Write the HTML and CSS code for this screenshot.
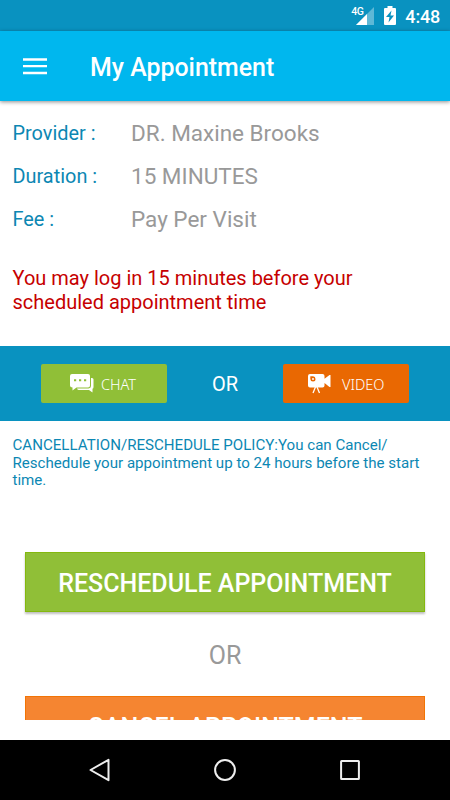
FILE: index.html
```html
<!DOCTYPE html>
<html lang="en">
<head>
  <meta charset="UTF-8" />
  <meta name="viewport" content="width=device-width, initial-scale=1.0"/>
  <title>My Appointment</title>
  <link rel="stylesheet" href="styles.css">
</head>
<body>
  <div class="status-bar">
    <div class="signal">
      <span class="network">4G</span>
      <svg width="18" height="18" viewBox="0 0 18 18">
        <path d="M18 0V18H0z" fill="#fff" opacity=".35"/>
        <path d="M11 7V18H0z" fill="#fff"/>
      </svg>
    </div>
    <svg class="battery" width="12" height="19" viewBox="0 0 12 19">
      <path d="M3.500 0h5v2H11q1 0 1 1v15q0 1-1 1H1q-1 0-1-1V3q0-1 1-1h2.500z" fill="#fff"/>
      <path d="M7.500 4.500L2 11h3.500L4.500 16.500 10 9.500H6.500z" fill="#0992c0"/>
    </svg>
    <span class="clock">4:48</span>
  </div>

  <div class="navbar">
    <svg class="menu-icon" width="24" height="17" viewBox="0 0 24 17">
      <path d="M0 1.500h24M0 8.200h24M0 15h24" stroke="#fff" stroke-width="2.300"/>
    </svg>
    <span class="navbar-title">My Appointment</span>
  </div>

  <div class="content">
    <div class="details">
      <span class="label">Provider :</span><span class="value">DR. Maxine Brooks</span>
      <span class="label">Duration :</span><span class="value">15 MINUTES</span>
      <span class="label">Fee :</span><span class="value">Pay Per Visit</span>
    </div>

    <p class="notice">You may log in 15 minutes before your scheduled appointment time</p>

    <div class="visit-bar">
      <button class="visit-btn chat-btn">
        <svg width="24" height="19" viewBox="0 0 24 19">
          <path d="M21 4h1q1.500 0 1.500 1.500V13q0 1.500-1 1.800V18.500L19 16H9q-1.500 0-2-1.600h11.500q2.500 0 2.500-2.400z" fill="#fff"/>
          <path d="M2 0h16q2 0 2 2v9.500q0 2-2 2H6.500L2.500 16.500v-3Q0 13.500 0 11.500V2Q0 0 2 0z" fill="#fff"/>
          <path d="M4 5.200h2.200v2H4zM9 5.200h2.200v2H9zM14 5.200h2.200v2H14z" fill="#90bf37"/>
        </svg>
        <span>CHAT</span>
      </button>
      <span class="visit-or">OR</span>
      <button class="visit-btn video-btn">
        <svg width="23" height="20" viewBox="0 0 23 20">
          <path d="M2 0h12.500q2 0 2 2v2.800L21.500 1H22.500v12H21.500l-5-4v2.500q0 2-2 2H2q-2 0-2-2V2q0-2 2-2z" fill="#fff"/>
          <path d="M7.500 13L5 19M9 13l2.500 6" stroke="#fff" stroke-width="1.300"/>
          <path d="M2.300 2.300H5Q7.500 2.500 7.500 5T5 7.500 2.300 5z" fill="#e96802"/>
          <circle cx="5" cy="5" r="1" fill="#fff"/>
        </svg>
        <span>VIDEO</span>
      </button>
    </div>

    <p class="policy">CANCELLATION/RESCHEDULE POLICY:You can Cancel/<br>Reschedule your appointment up to 24 hours before the start time.</p>

    <div class="actions">
      <button class="action-btn reschedule">RESCHEDULE APPOINTMENT</button>
      <span class="action-or">OR</span>
      <button class="action-btn cancel">CANCEL APPOINTMENT</button>
    </div>
  </div>

  <div class="system-nav">
    <svg width="24" height="24" viewBox="0 0 24 24">
      <path d="M2.500 12L20.500 1.800V22.200z"/>
    </svg>
    <svg width="24" height="24" viewBox="0 0 24 24">
      <circle cx="12" cy="12" r="9.900"/>
    </svg>
    <svg width="24" height="24" viewBox="0 0 24 24">
      <rect x="3.100" y="3.100" width="17.800" height="17.800" rx=".5"/>
    </svg>
  </div>
</body>
</html>
```
FILE: styles.css
```css
* {
  box-sizing: border-box;
}

body {
  font-family: Roboto, sans-serif;
  background-color: #ffffff;
  margin: 0;
  height: 800px;
  display: flex;
  flex-direction: column;
  overflow: hidden;
}

button {
  font-family: inherit;
  color: white;
  border: none;
  padding: 0;
  cursor: pointer;
}

.status-bar {
  height: 31px;
  flex-shrink: 0;
  background-color: #0992c0;
  color: white;
  display: flex;
  justify-content: flex-end;
  align-items: center;
  padding-right: 10px;
}

.signal {
  display: flex;
  align-items: flex-start;
}

.network {
  font-size: 10.500px;
  line-height: 9px;
  font-weight: 500;
  letter-spacing: -0.5px;
  margin-right: -7px;
}

.battery {
  margin-left: 10px;
}

.clock {
  font-size: 18px;
  font-weight: 500;
  letter-spacing: -0.2px;
  margin-left: 9px;
  line-height: 31px;
  padding-top: 1px;
}

.navbar {
  height: 70px;
  flex-shrink: 0;
  background-color: #00b7ee;
  color: white;
  display: flex;
  align-items: center;
  padding-left: 23px;
  box-shadow: 0 1px 4px rgba(0, 0, 0, 0.45);
  z-index: 1;
}

.navbar-title {
  font-size: 24.900px;
  font-weight: 500;
  margin-left: 43px;
  padding-top: 2px;
}

.content {
  height: 619px;
  flex-shrink: 0;
  overflow: hidden;
}

.details {
  display: grid;
  grid-template-columns: 118.500px 1fr;
  grid-auto-rows: 43px;
  align-items: center;
  padding: 10px 0 0 12.500px;
}

.label {
  color: #0c87b3;
  font-size: 19.900px;
  padding-top: 1px;
}

.value {
  color: #999999;
  font-size: 22.500px;
}

.notice {
  color: #c60000;
  font-size: 20px;
  line-height: 23.500px;
  margin: 27px 60px 0 12.500px;
  height: 79px;
}

.visit-bar {
  height: 75px;
  background-color: #0992c0;
  display: flex;
  justify-content: space-between;
  align-items: center;
  padding: 0 41px;
}

.visit-btn {
  width: 126px;
  height: 39px;
  border-radius: 2px;
  display: flex;
  align-items: center;
  font-family: "Noto Sans", sans-serif;
  font-size: 14.500px;
}

.chat-btn {
  background-color: #90bf37;
  padding-left: 29px;
  gap: 7px;
}

.video-btn {
  background-color: #e96802;
  padding-left: 25px;
  gap: 11px;
}

.visit-btn span {
  font-weight: 300;
}

.visit-or {
  color: white;
  font-size: 20px;
}

.policy {
  color: #0c87b3;
  font-size: 15.100px;
  line-height: 17.500px;
  margin: 16px 25px 0 12.500px;
}

.actions {
  display: flex;
  flex-direction: column;
  padding: 62px 25px 0;
}

.action-btn {
  height: 60px;
  flex-shrink: 0;
  font-size: 25px;
  font-weight: 500;
  padding-top: 3px;
}

.reschedule {
  background-color: #90bf37;
  border: 1px solid #84b80f;
  box-shadow: 0 2px 2px rgba(0, 0, 0, 0.25);
}

.cancel {
  background-color: #f58531;
  border: 1px solid #f27405;
}

.action-or {
  color: #999999;
  font-size: 25px;
  line-height: 80px;
  padding-top: 4px;
  text-align: center;
}

.system-nav {
  height: 60px;
  margin-top: 20px;
  flex-shrink: 0;
  background-color: #000000;
  display: flex;
  justify-content: center;
  align-items: center;
  gap: 101px;
}

.system-nav svg {
  fill: none;
  stroke: #eeeeee;
  stroke-width: 2;
  stroke-linejoin: round;
}
```
